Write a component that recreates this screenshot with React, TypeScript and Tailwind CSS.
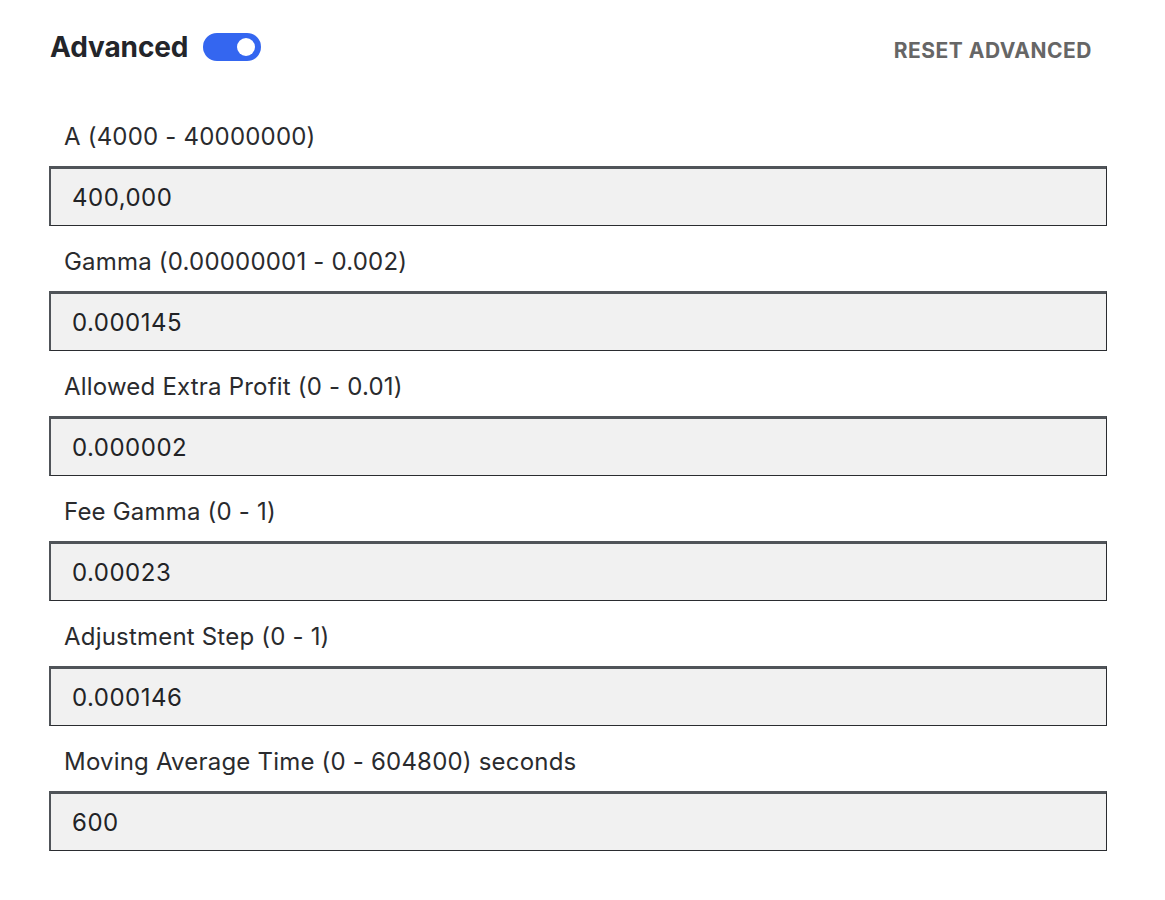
import React from "react";

const fields = [
  { label: "A (4000 - 40000000)", value: "400,000" },
  { label: "Gamma (0.00000001 - 0.002)", value: "0.000145" },
  { label: "Allowed Extra Profit (0 - 0.01)", value: "0.000002" },
  { label: "Fee Gamma (0 - 1)", value: "0.00023" },
  { label: "Adjustment Step (0 - 1)", value: "0.000146" },
  { label: "Moving Average Time (0 - 604800) seconds", value: "600" },
];

export default function App() {
  return (
    <div
      className="min-h-[900px] bg-white pl-[49px] pr-[58px] pt-[32px] text-[#222326]"
      style={{ fontFamily: 'Inter, "Noto Sans", "Liberation Sans", sans-serif' }}
    >
      {/* Header */}
      <div className="flex items-center h-[30px]">
        <h2 className="text-[28px] font-bold leading-[30px] pl-[1px] tracking-[-0.1px] text-[#23252a]">Advanced</h2>
        <button className="ml-[15px] w-[58px] h-[28px] rounded-full bg-[#3466f0] flex items-center justify-end pr-[6px]">
          <span className="w-[18px] h-[18px] rounded-full bg-white" />
        </button>
        <span className="flex-1" />
        <button className="mt-[8px] pr-[15px] text-[21px] font-bold leading-[24px] tracking-[0.5px] text-[#666666]">
          RESET ADVANCED
        </button>
      </div>

      {/* Fields */}
      <div className="mt-[60px] flex flex-col gap-[21px]">
        {fields.map((f) => (
          <div key={f.label} className="flex flex-col">
            <label className="pl-[15px] text-[24px] leading-[30px] tracking-[0.2px] text-[#2a2b2e]">{f.label}</label>
            <div className="mt-[14px] h-[60px] bg-[#f1f1f1] border-t-[3px] border-l-[2px] border-r border-b border-t-[#505459] border-l-[#505459] border-r-[#2a2c30] border-b-[#2a2c30] flex items-center pl-[21px] pt-[1px]">
              <span className="text-[24px] tracking-[0.5px] text-[#222326]">{f.value}</span>
            </div>
          </div>
        ))}
      </div>
    </div>
  );
}
